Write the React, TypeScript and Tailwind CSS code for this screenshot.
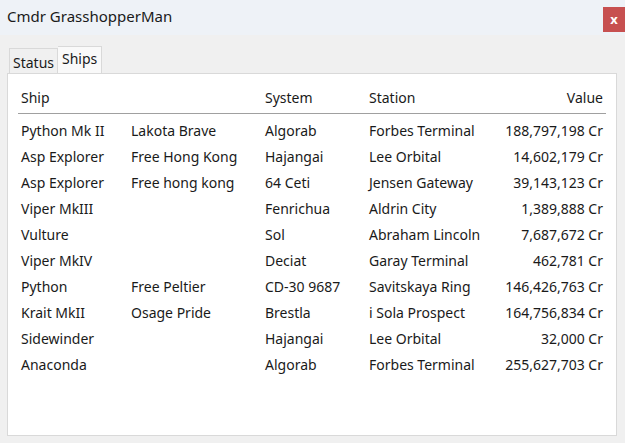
const ships = [
  ["Python Mk II", "Lakota Brave", "Algorab", "Forbes Terminal", "188,797,198 Cr"],
  ["Asp Explorer", "Free Hong Kong", "Hajangai", "Lee Orbital", "14,602,179 Cr"],
  ["Asp Explorer", "Free hong kong", "64 Ceti", "Jensen Gateway", "39,143,123 Cr"],
  ["Viper MkIII", "", "Fenrichua", "Aldrin City", "1,389,888 Cr"],
  ["Vulture", "", "Sol", "Abraham Lincoln", "7,687,672 Cr"],
  ["Viper MkIV", "", "Deciat", "Garay Terminal", "462,781 Cr"],
  ["Python", "Free Peltier", "CD-30 9687", "Savitskaya Ring", "146,426,763 Cr"],
  ["Krait MkII", "Osage Pride", "Brestla", "i Sola Prospect", "164,756,834 Cr"],
  ["Sidewinder", "", "Hajangai", "Lee Orbital", "32,000 Cr"],
  ["Anaconda", "", "Algorab", "Forbes Terminal", "255,627,703 Cr"],
];

const cols = "grid grid-cols-[110px_134px_104px_1fr_auto] px-[3px]";

export default function App() {
  return (
    <div className="w-[625px] h-[443px] flex flex-col bg-[#f0f0f0] text-[#1a1a1a] font-['Noto_Sans',sans-serif] overflow-hidden">
      {/* title bar */}
      <div className="h-[35px] shrink-0 bg-[#eef2f7] flex items-start justify-between">
        <span className="pl-[7px] pt-[6px] text-[15px] leading-[20px]">Cmdr GrasshopperMan</span>
        <button className="mt-[7px] w-[22px] h-[25px] bg-[#c75050] text-white text-[13px] font-bold flex items-center justify-center">
          x
        </button>
      </div>

      {/* tabs */}
      <div className="flex items-end pl-[9px] pt-[11px] h-[38px] shrink-0">
        <div className="h-[25px] px-[3px] border border-b-0 border-[#d9d9d9] bg-[#f0f0f0] text-[14px] leading-[22px] pt-[3px]">
          Status
        </div>
        <div className="h-[27px] px-[4px] border border-b-0 border-l-0 border-[#d9d9d9] bg-[#f9f9f9] text-[14px] leading-[24px]">
          Ships
        </div>
      </div>

      {/* panel */}
      <div className="ml-[7px] w-[610px] h-[363px] border border-[#d9d9d9] bg-white px-[10px] pt-[8px] text-[14px]">
        <div className={`${cols} h-[32px] items-center border-b border-[#a0a0a0]`}>
          <span>Ship</span>
          <span></span>
          <span>System</span>
          <span>Station</span>
          <span className="text-right">Value</span>
        </div>
        <div className="pt-[3px]">
          {ships.map((r, i) => (
            <div key={i} className={`${cols} h-[26px] items-center`}>
              <span>{r[0]}</span>
              <span>{r[1]}</span>
              <span>{r[2]}</span>
              <span>{r[3]}</span>
              <span className="text-right">{r[4]}</span>
            </div>
          ))}
        </div>
      </div>
    </div>
  );
}
